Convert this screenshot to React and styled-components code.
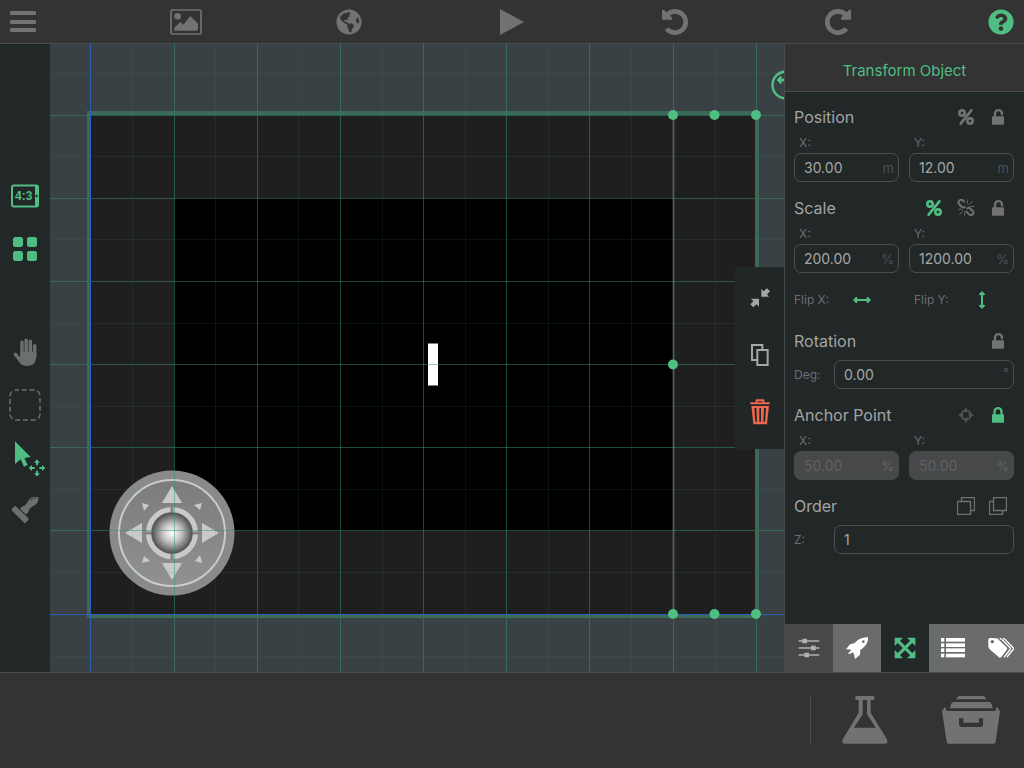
import React from 'react';
import styled, { createGlobalStyle } from 'styled-components';
import { FaGlobeAmericas, FaQuestionCircle } from 'react-icons/fa';

const GREEN = '#50bd83';
const GRAY = '#727272';

const GlobalStyle = createGlobalStyle`
  * { box-sizing: border-box; }
  body {
    margin: 0;
    background: #333333;
    color: #a2a4a4;
    font-family: Inter, "Liberation Sans", sans-serif;
    font-size: 16px;
  }
`;

const Page = styled.div`
  display: flex;
  flex-direction: column;
  min-height: 100vh;
`;

const TopBar = styled.header`
  display: flex;
  justify-content: space-between;
  height: 44px;
  padding: 0 1px;
  background: #333333;
  border-bottom: 1px solid #4d4f4f;
`;

const IconButton = styled.button`
  display: flex;
  align-items: center;
  justify-content: center;
  width: ${(p) => p.$w || 32}px;
  height: ${(p) => p.$h || 30}px;
  padding: 0;
  border: 0;
  background: ${(p) => p.$bg || 'transparent'};
  color: ${(p) => p.$color || GRAY};
  cursor: pointer;
  svg { display: block; flex: none; }
`;

const Workspace = styled.main`
  display: flex;
  flex: 1;
`;

const Rail = styled.nav`
  display: flex;
  flex-direction: column;
  justify-content: center;
  gap: 50px;
  width: 50px;
  padding-bottom: 10px;
  background: #222728;
`;

const RailGroup = styled.div`
  display: flex;
  flex-direction: column;
`;

const Stage = styled.section`
  position: relative;
  flex: 1;
  min-width: 0;
  overflow: hidden;
  background: #3a4144;
`;

const Scene = styled.svg`
  position: absolute;
  inset: 0;
  display: block;
  width: 100%;
  height: 100%;
`;

const ObjectActions = styled.div`
  position: absolute;
  right: 0;
  top: 50%;
  transform: translateY(-50%);
  display: flex;
  flex-direction: column;
  padding: 2px 0 9px;
  background: #212626;
`;

const Panel = styled.aside`
  display: flex;
  flex-direction: column;
  width: 240px;
  background: #222728;
`;

const PanelTitle = styled.h1`
  display: flex;
  align-items: center;
  justify-content: center;
  height: 48px;
  margin: 0;
  padding-top: 5px;
  border-left: 1px solid #474a4b;
  border-bottom: 1px solid #4b4d4d;
  background: #333333;
  color: ${GREEN};
  font-size: 15px;
  font-weight: 400;
`;

const PanelBody = styled.form`
  display: flex;
  flex: 1;
  flex-direction: column;
  gap: 11px;
  padding: 10px 10px 10px 9px;
  border-left: 1px solid #474a4b;
`;

const SectionHeader = styled.div`
  display: flex;
  align-items: center;
  height: 30px;
`;

const SectionTitle = styled.h2`
  flex: 1;
  margin: 0;
  font-size: 16px;
  font-weight: 400;
`;

const FieldPair = styled.div`
  display: grid;
  grid-template-columns: 1fr 1fr;
  gap: 10px;
`;

const Label = styled.label`
  display: block;
  color: #6b6e6f;
  font-size: 12px;
  line-height: 21px;
  padding-left: ${(p) => (p.$indent ? 5 : 0)}px;
`;

const InputBox = styled.div`
  display: flex;
  align-items: center;
  flex: 1;
  height: 29px;
  padding: 0 4px 0 9px;
  border: 1px solid ${(p) => (p.$disabled ? '#474a4b' : '#4c4f50')};
  border-radius: 7px;
  background: ${(p) => (p.$disabled ? '#474849' : 'transparent')};
  font-size: 14px;
`;

const Input = styled.input`
  flex: 1;
  width: 0;
  padding: 0;
  border: 0;
  outline: 0;
  background: transparent;
  color: #a5a7a7;
  font: inherit;
  &:disabled { color: #5f6162; }
`;

const Unit = styled.span`
  color: ${(p) => (p.$disabled ? '#646667' : '#4f5253')};
  font-size: 13px;
  align-self: ${(p) => (p.$raised ? 'flex-start' : 'center')};
  padding-top: ${(p) => (p.$raised ? 4 : 0)}px;
`;

const WideRow = styled.div`
  display: grid;
  grid-template-columns: 40px 1fr;
  align-items: center;
  padding-top: 4px;
`;

const FlipRow = styled.div`
  display: grid;
  grid-template-columns: 120px 1fr;
  height: 31px;
`;

const FlipItem = styled.div`
  display: grid;
  grid-template-columns: 52px 32px;
  align-items: center;
`;

const Tabs = styled.nav`
  display: grid;
  grid-template-columns: 49px repeat(3, 48px) 1fr;
  height: 48px;
`;

const Footer = styled.footer`
  display: flex;
  align-items: center;
  justify-content: flex-end;
  height: 96px;
  padding: 0 24px 2px 0;
  border-top: 1px solid #4b4d4d;
  background: #333333;
`;

const Divider = styled.div`
  width: 1px;
  height: 48px;
  margin-right: 31px;
  background: #4c4c4c;
`;

const FooterTools = styled.div`
  display: flex;
  gap: 54px;
`;

const Icon = ({ w, h, box, children }) => (
  <svg width={w} height={h} viewBox={box} fill="currentColor" aria-hidden="true">
    {children}
  </svg>
);

const MenuIcon = () => (
  <Icon w={28} h={24} box="0 0 28 24">
    {[1, 10, 18].map((y) => <rect key={y} x="1" y={y} width="26" height="4" rx="1" />)}
  </Icon>
);

const PictureIcon = () => (
  <Icon w={32} h={26} box="0 0 96 78">
    <rect x="3" y="3" width="90" height="72" rx="5" fill="none" stroke="currentColor" strokeWidth="5" />
    <circle cx="23" cy="22" r="10" />
    <path d="M13 65V56L31 39L40 47L61 21L84 44V60Q84 65 79 65Z" />
  </Icon>
);

const PlayIcon = () => (
  <Icon w={24} h={26} box="0 0 24 26"><path d="M0 0L24 13L0 26Z" /></Icon>
);

const UndoIcon = () => (
  <Icon w={26} h={26} box="0 0 78 78">
    <path d="M14 59A32 32 0 1 0 16 17" fill="none" stroke="currentColor" strokeWidth="14" />
    <path d="M0 2L6 3L30 26V32H0Z" />
  </Icon>
);

const RedoIcon = () => (
  <Icon w={26} h={26} box="0 0 78 78">
    <path d="M64 59A32 32 0 1 1 62 17" fill="none" stroke="currentColor" strokeWidth="14" />
    <path d="M78 2L72 3L48 26V32H78Z" />
  </Icon>
);

const AspectIcon = () => (
  <Icon w={30} h={24} box="0 0 30 24">
    <rect x="2" y="1.500" width="26" height="21" rx="2" fill="none" stroke="currentColor" strokeWidth="2" />
    <rect x="25" y="1.500" width="4" height="21" rx="1" />
    <circle cx="26.500" cy="12" r="1.200" fill="#222728" />
    <text x="5" y="16" fontFamily="Liberation Sans, sans-serif" fontWeight="700" fontSize="12">4:3</text>
  </Icon>
);

const GridIcon = () => (
  <Icon w={24} h={24} box="0 0 72 72">
    {[[0, 0], [42, 0], [0, 42], [42, 42]].map(([x, y]) => (
      <rect key={`${x}-${y}`} x={x} y={y} width="30" height="30" rx="7" />
    ))}
  </Icon>
);

const HandIcon = () => (
  <Icon w={26} h={30} box="37 504 78 90">
    <g fill="none" stroke="currentColor" strokeLinecap="round" strokeWidth="10.500">
      <path d="M67 520V560M79.500 514V560M92 517V560M105 530V562M47 556L62 574" />
    </g>
    <path d="M62 548H110V562Q110 591 82 591Q66 591 58 578L52 568L62 562Z" />
  </Icon>
);

const MarqueeIcon = () => (
  <Icon w={32} h={32} box="0 0 32 32">
    <rect x="1" y="1" width="30" height="30" rx="6" fill="none" stroke="currentColor" strokeWidth="1.500" strokeDasharray="5 2.800" strokeDashoffset="2" />
  </Icon>
);

const SelectMoveIcon = () => (
  <Icon w={32} h={36} box="42 814 96 108">
    <path d="M45 818L92 865L73 868L83 889L72 894L62 872L45 886Z" />
    <path d="M111 872L120 882H114V890H108V882H102ZM111 924L120 914H114V906H108V914H102ZM86 898L96 889V895H104V901H96V907ZM136 898L126 889V895H118V901H126V907Z" />
  </Icon>
);

const StampIcon = () => (
  <Icon w={28} h={28} box="35 979 84 84">
    <path d="M38 1014L45 1007Q48 1005 51 1008L87 1043Q89 1046 87 1048L79 1056Q76 1058 73 1055L38 1020Q35 1017 38 1014Z" />
    <path d="M62 1014L66 1009C79 1006 83 997 88 989C93 979 107 976 116 979C119 988 114 1000 106 1004C96 1010 91 1012 87 1024L80 1032Z" />
    <path d="M92 989Q99 982 110 982" fill="none" stroke="#3a3f40" strokeWidth="3" />
  </Icon>
);

const CollapseIcon = () => (
  <Icon w={20} h={20} box="271 145 60 60">
    <path d="M305 171V148L312 155L322 146L331 155L322 164L328 171Z" />
    <path d="M298 177V201L291 194L281 203L272 194L281 185L274 177Z" />
  </Icon>
);

const CopyIcon = () => (
  <Icon w={18} h={22} box="275 312 54 66">
    <path d="M292 360H278V315H309V328M294 330H325V375H294Z" fill="none" stroke="currentColor" strokeWidth="6" />
  </Icon>
);

const TrashIcon = () => (
  <Icon w={20} h={26} box="269 479 60 78">
    <path d="M289 491V483H309V491M270 492H328" fill="none" stroke="currentColor" strokeWidth="6" />
    <path fillRule="evenodd" d="M273 500H326L320 555H279ZM282 506L285 547H290L288 506ZM297 506V547H302V506ZM311 506L309 547H314L317 506Z" />
  </Icon>
);

const PercentIcon = () => (
  <Icon w={16} h={16} box="0 0 48 48">
    <g fill="none" stroke="currentColor" strokeWidth="8">
      <circle cx="12" cy="12" r="8" />
      <circle cx="36" cy="36" r="8" />
      <path d="M40 4L8 44" strokeLinecap="round" />
    </g>
  </Icon>
);

const LockIcon = ({ open }) => (
  <Icon w={12} h={16} box="0 0 36 48">
    <rect y="22" width="36" height="25" rx="2" />
    <path d={open ? 'M9 24V14A10.500 10.500 0 0 1 30 14V19' : 'M7.500 24V14A10.500 10.500 0 0 1 28.500 14V24'} fill="none" stroke="currentColor" strokeWidth="7" />
  </Icon>
);

const UnlinkIcon = () => (
  <Icon w={18} h={18} box="519 43 54 54">
    <g fill="none" stroke="currentColor" strokeLinecap="round">
      <path d="M540 51L536 47Q531 43 526 48Q521 53 525 58L534 67Q538 70 542 67" strokeWidth="6" />
      <path d="M550 71Q553 67 558 71L566 79Q571 84 566 89Q561 94 555 89L547 81" strokeWidth="6" />
      <path d="M550 57V46M555 60L565 50M558 65H570M542 82V92M537 79L527 90M534 74H523" strokeWidth="2.500" />
    </g>
  </Icon>
);

const TargetIcon = () => (
  <Icon w={16} h={16} box="0 0 48 48">
    <circle cx="24" cy="24" r="14" fill="none" stroke="currentColor" strokeWidth="5" strokeDasharray="15 7" strokeDashoffset="-3.500" />
    <path d="M24 0L29 9V16H19V9ZM24 48L29 39V32H19V39ZM0 24L9 19H16V29H9ZM48 24L39 19H32V29H39Z" />
  </Icon>
);

const HorizontalIcon = () => (
  <Icon w={18} h={10} box="207 328 54 30">
    <path d="M214 343H254M217 337L211 343L217 349ZM251 337L257 343L251 349Z" fill="currentColor" stroke="currentColor" strokeWidth="6" strokeLinecap="round" strokeLinejoin="round" />
  </Icon>
);

const VerticalIcon = () => (
  <Icon w={10} h={18} box="328 207 30 54">
    <path d="M343 214V254M337 217L343 211L349 217ZM337 251L343 257L349 251Z" fill="currentColor" stroke="currentColor" strokeWidth="6" strokeLinecap="round" strokeLinejoin="round" />
  </Icon>
);

const SendBackIcon = () => (
  <Icon w={18} h={18} box="0 0 18 18">
    <path d="M0.500 4.500H13.500V17.500H0.500ZM4.500 4V0.500H17.500V13.500H14" fill="none" stroke="currentColor" strokeWidth="1.300" />
  </Icon>
);

const BringFrontIcon = () => (
  <Icon w={18} h={18} box="0 0 18 18">
    <path d="M4.500 0.500H17.500V13.500H4.500ZM4 4.500H0.500V17.500H13.500V14" fill="none" stroke="currentColor" strokeWidth="1.300" />
  </Icon>
);

const SlidersIcon = () => (
  <Icon w={22} h={20} box="101 236 66 60">
    <path d="M103 245H165M103 266H165M103 287H165" stroke="currentColor" strokeWidth="4" />
    <path d="M114 238h14v14h-14zM140 259h14v14h-14zM120 280h14v14h-14z" />
  </Icon>
);

const RocketIcon = () => (
  <Icon w={22} h={22} box="248 232 66 66">
    <path fillRule="evenodd" d="M314 233C298 232 284 238 273 251L260 254L248 269Q258 267 264 272Q257 276 254 284Q263 283 269 278Q274 286 275 298L290 285L291 270C307 261 315 248 314 233ZM300 242A4 4 0 1 0 300 250A4 4 0 1 0 300 242Z" />
  </Icon>
);

const ExpandIcon = () => (
  <Icon w={22} h={22} box="389 231 66 66">
    <path d="M399 241L445 287M445 241L399 287" stroke="currentColor" strokeWidth="9" />
    <path d="M391 233H416L391 258ZM453 233H428L453 258ZM391 295H416L391 270ZM453 295H428L453 270Z" />
  </Icon>
);

const ListIcon = () => (
  <Icon w={24} h={20} box="0 0 72 60">
    {[0, 16, 31, 47].map((y) => (
      <g key={y}>
        <rect y={y} width="10" height="11" />
        <rect x="15" y={y} width="57" height="11" />
      </g>
    ))}
  </Icon>
);

const TagsIcon = () => (
  <Icon w={26} h={22} box="671 231 78 66">
    <path fillRule="evenodd" d="M672 239Q672 234 677 234L696 235Q701 236 704 240L727 262Q731 266 727 270L711 291Q707 295 703 291L676 268Q672 264 672 259ZM684 240A5 5 0 1 0 684 250A5 5 0 1 0 684 240Z" />
    <path d="M706 235Q711 236 715 241L736 262Q740 266 736 270L719 292M716 235Q722 237 726 242L745 262Q749 266 745 270L728 291" fill="none" stroke="currentColor" strokeWidth="4" />
  </Icon>
);

const FlaskIcon = () => (
  <Icon w={46} h={48} box="235 408 138 144">
    <rect x="275" y="408" width="57" height="12" rx="4" />
    <path fillRule="evenodd" d="M285 418H321V458L369 536Q376 551 362 551H245Q231 551 238 536L285 458ZM297 420V463L271 503H336L310 463V420Z" />
  </Icon>
);

const DrawerIcon = () => (
  <Icon w={58} h={48} box="534 408 174 144">
    <path d="M577 418Q579 408 588 408H655Q664 408 666 418ZM558 445L561 433Q563 426 570 426H674Q681 426 683 433L686 445Z" />
    <path fillRule="evenodd" d="M534 454L543 440L548 453H694L699 440L708 454L695 545Q694 551 688 551H554Q549 551 548 545ZM585 475V493Q585 501 594 501H649Q657 501 657 493V475H645V488H598V475Z" />
  </Icon>
);

const MAJOR_X = [124, 207, 290, 373, 456, 539, 623, 706];
const MINOR_X = [82, 165, 248, 332, 415, 498, 581, 665];
const MAJOR_Y = [71, 154, 237, 320, 403, 486];
const MINOR_Y = [29, 112, 195, 279, 362, 445, 528, 612];
const HANDLES = [[623, 71], [664.5, 71], [706, 71], [623, 320.5], [623, 570], [664.5, 570], [706, 570]];

const Joystick = () => (
  <g transform="translate(122 489)">
    <circle r="62.500" fill="#8a8a8a" />
    <circle r="53" fill="url(#pad)" stroke="#cbcbcb" strokeWidth="2" />
    <circle r="23.500" fill="none" stroke="#c9c9c9" strokeWidth="5" />
    <path d="M0 -27V27M-27 0H27" stroke="#858585" strokeWidth="3" />
    {[0, 90, 180, 270].map((a) => (
      <g key={a} transform={`rotate(${a})`} fill="#c9c9c9">
        <path d="M0 -47L10 -30H-10Z" />
        <path d="M30 -30L28 -23L22 -28Z" />
      </g>
    ))}
    <circle r="20.500" fill="url(#ball)" />
  </g>
);

const StageScene = () => (
  <Scene role="img" aria-label="Scene editor">
    <defs>
      <radialGradient id="ball">
        <stop offset="0" stopColor="#ffffff" />
        <stop offset="0.450" stopColor="#c4c4c4" />
        <stop offset="1" stopColor="#4e4e4e" />
      </radialGradient>
      <linearGradient id="pad" x1="0" y1="0" x2="0" y2="1">
        <stop offset="0" stopColor="#7c7c7c" />
        <stop offset="1" stopColor="#919191" />
      </linearGradient>
    </defs>
    <rect x="40" y="70" width="667" height="501" fill="#1f1f1f" />
    <rect x="124" y="154" width="499" height="333" fill="#000000" />
    <rect x="378" y="299.500" width="10" height="42" fill="#ffffff" />
    <Joystick />
    <g fill="#339470">
      {MINOR_X.map((x) => <rect key={x} x={x} width="1" height="100%" opacity="0.130" />)}
      {MINOR_Y.map((y) => <rect key={y} y={y} width="100%" height="1" opacity="0.130" />)}
      {MAJOR_X.map((x) => <rect key={x} x={x} width="1" height="100%" opacity="0.500" />)}
      {MAJOR_Y.map((y) => <rect key={y} y={y} width="100%" height="1" opacity="0.500" />)}
    </g>
    <rect x="39" y="69" width="668" height="503" fill="none" stroke="#3b6b58" strokeWidth="4" />
    <rect x="622" y="71" width="3" height="499" fill="#83a495" opacity="0.200" />
    <rect x="40" width="1" height="100%" fill="#2c5dbd" />
    <rect y="570" width="100%" height="1" fill="#2c5dbd" />
    {HANDLES.map(([x, y]) => <circle key={`${x}-${y}`} cx={x} cy={y} r="5" fill={GREEN} />)}
    <circle cx="736" cy="41" r="13.500" fill="none" stroke={GREEN} strokeWidth="2.500" />
    <path d="M727 36L731 32V35H735V37H731V40Z" fill={GREEN} stroke={GREEN} />
  </Scene>
);

const Field = ({ id, label, value, unit, disabled }) => (
  <div>
    <Label htmlFor={id} $indent>{label}</Label>
    <InputBox $disabled={disabled}>
      <Input id={id} defaultValue={value} disabled={disabled} />
      <Unit $disabled={disabled}>{unit}</Unit>
    </InputBox>
  </div>
);

const Tool = ({ label, children, ...rest }) => (
  <IconButton type="button" aria-label={label} {...rest}>{children}</IconButton>
);

export default function App() {
  return (
    <Page>
      <GlobalStyle />
      <TopBar>
        <Tool label="Menu" $w={44} $h={43}><MenuIcon /></Tool>
        <Tool label="Scenes" $w={44} $h={43}><PictureIcon /></Tool>
        <Tool label="World" $w={44} $h={43}><FaGlobeAmericas size={26} /></Tool>
        <Tool label="Play" $w={44} $h={43}><PlayIcon /></Tool>
        <Tool label="Undo" $w={44} $h={43}><UndoIcon /></Tool>
        <Tool label="Redo" $w={44} $h={43}><RedoIcon /></Tool>
        <Tool label="Help" $w={44} $h={43} $color={GREEN}><FaQuestionCircle size={26} /></Tool>
      </TopBar>

      <Workspace>
        <Rail>
          <RailGroup>
            <Tool label="Aspect ratio" $w={50} $h={53} $color={GREEN}><AspectIcon /></Tool>
            <Tool label="Grid" $w={50} $h={53} $color={GREEN}><GridIcon /></Tool>
          </RailGroup>
          <RailGroup>
            <Tool label="Pan" $w={50} $h={53} $color="#6c6e6f"><HandIcon /></Tool>
            <Tool label="Marquee select" $w={50} $h={53} $color="#6c6e6f"><MarqueeIcon /></Tool>
            <Tool label="Select and move" $w={60} $h={53} $color={GREEN}><SelectMoveIcon /></Tool>
            <Tool label="Stamp" $w={50} $h={53} $color="#6c6e6f"><StampIcon /></Tool>
          </RailGroup>
        </Rail>

        <Stage>
          <StageScene />
          <ObjectActions>
            <Tool label="Collapse" $w={49} $h={57} $color="#a5a6a5"><CollapseIcon /></Tool>
            <Tool label="Duplicate" $w={49} $h={57} $color="#a5a6a5"><CopyIcon /></Tool>
            <Tool label="Delete" $w={49} $h={57} $color="#ec674d"><TrashIcon /></Tool>
          </ObjectActions>
        </Stage>

        <Panel>
          <PanelTitle>Transform Object</PanelTitle>
          <PanelBody>
            <section>
              <SectionHeader>
                <SectionTitle>Position</SectionTitle>
                <Tool label="Position in percent"><PercentIcon /></Tool>
                <Tool label="Lock position"><LockIcon open /></Tool>
              </SectionHeader>
              <FieldPair>
                <Field id="position-x" label="X:" value="30.00" unit="m" />
                <Field id="position-y" label="Y:" value="12.00" unit="m" />
              </FieldPair>
            </section>
            <section>
              <SectionHeader>
                <SectionTitle>Scale</SectionTitle>
                <Tool label="Scale in percent" $color={GREEN}><PercentIcon /></Tool>
                <Tool label="Link scale axes"><UnlinkIcon /></Tool>
                <Tool label="Lock scale"><LockIcon open /></Tool>
              </SectionHeader>
              <FieldPair>
                <Field id="scale-x" label="X:" value="200.00" unit="%" />
                <Field id="scale-y" label="Y:" value="1200.00" unit="%" />
              </FieldPair>
            </section>
            <FlipRow>
              <FlipItem>
                <Label htmlFor="flip-x">Flip X:</Label>
                <Tool id="flip-x" label="Flip X" $color={GREEN}><HorizontalIcon /></Tool>
              </FlipItem>
              <FlipItem>
                <Label htmlFor="flip-y">Flip Y:</Label>
                <Tool id="flip-y" label="Flip Y" $color={GREEN}><VerticalIcon /></Tool>
              </FlipItem>
            </FlipRow>
            <section>
              <SectionHeader>
                <SectionTitle>Rotation</SectionTitle>
                <Tool label="Lock rotation"><LockIcon open /></Tool>
              </SectionHeader>
              <WideRow>
                <Label htmlFor="rotation">Deg:</Label>
                <InputBox>
                  <Input id="rotation" defaultValue="0.00" />
                  <Unit $raised>°</Unit>
                </InputBox>
              </WideRow>
            </section>
            <section>
              <SectionHeader>
                <SectionTitle>Anchor Point</SectionTitle>
                <Tool label="Center anchor" $color="#505354"><TargetIcon /></Tool>
                <Tool label="Unlock anchor" $color={GREEN}><LockIcon /></Tool>
              </SectionHeader>
              <FieldPair>
                <Field id="anchor-x" label="X:" value="50.00" unit="%" disabled />
                <Field id="anchor-y" label="Y:" value="50.00" unit="%" disabled />
              </FieldPair>
            </section>
            <section>
              <SectionHeader>
                <SectionTitle>Order</SectionTitle>
                <Tool label="Send backward"><SendBackIcon /></Tool>
                <Tool label="Bring forward"><BringFrontIcon /></Tool>
              </SectionHeader>
              <WideRow>
                <Label htmlFor="order">Z:</Label>
                <InputBox><Input id="order" defaultValue="1" /></InputBox>
              </WideRow>
            </section>
          </PanelBody>
          <Tabs>
            <Tool label="Settings" $w={49} $h={48} $bg="#474849" $color="#b0b1b1"><SlidersIcon /></Tool>
            <Tool label="Behaviors" $w={48} $h={48} $bg="#6a6b6b" $color="#ffffff"><RocketIcon /></Tool>
            <Tool label="Transform" $w={48} $h={48} $color={GREEN}><ExpandIcon /></Tool>
            <Tool label="Layers" $w={48} $h={48} $bg="#6a6b6b" $color="#ffffff"><ListIcon /></Tool>
            <Tool label="Tags" $w={47} $h={48} $bg="#6a6b6b" $color="#ffffff"><TagsIcon /></Tool>
          </Tabs>
        </Panel>
      </Workspace>

      <Footer>
        <Divider />
        <FooterTools>
          <Tool label="Lab" $w={46} $h={48}><FlaskIcon /></Tool>
          <Tool label="Library" $w={58} $h={48}><DrawerIcon /></Tool>
        </FooterTools>
      </Footer>
    </Page>
  );
}
